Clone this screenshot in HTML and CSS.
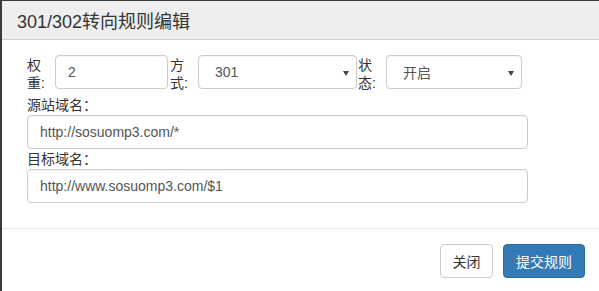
FILE: index.html
```html
<!DOCTYPE html>
<html lang="zh-CN">
<head>
    <meta charset="UTF-8">
    <title>301/302转向规则编辑</title>
    <link rel="stylesheet" href="styles.css">
</head>
<body>
    <div class="modal">
        <div class="modal-header">
            <h4 class="modal-title">301/302转向规则编辑</h4>
        </div>
        <div class="modal-body">
            <div class="inline-row">
                <label class="short-label">权重:</label>
                <div class="field weight">2</div>
                <label class="short-label">方式:</label>
                <div class="field select method"><span>301</span></div>
                <label class="short-label">状态:</label>
                <div class="field select state"><span>开启</span></div>
            </div>
            <label class="block-label">源站域名：</label>
            <div class="field wide">http://sosuomp3.com/*</div>
            <label class="block-label">目标域名：</label>
            <div class="field wide">http://www.sosuomp3.com/$1</div>
        </div>
        <div class="modal-footer">
            <button class="btn btn-default">关闭</button>
            <button class="btn btn-primary">提交规则</button>
        </div>
    </div>
</body>
</html>
```

FILE: styles.css
```css
* {
    margin: 0;
    padding: 0;
    box-sizing: border-box;
}

body {
    font-family: 'Liberation Sans', 'Noto Sans CJK SC', sans-serif;
    font-size: 14px;
    color: #333;
    background: #3a3a3a;
    height: 291px;
    overflow: hidden;
    padding: 1px 0 0 2px;
}

.modal {
    background: #fff;
    height: 290px;
}

.modal-header {
    background: #eee;
    height: 39px;
    border-bottom: 1px solid #d0d0d0;
    padding: 0 15px;
    display: flex;
    align-items: center;
}

.modal-title {
    font-size: 18px;
    font-weight: normal;
    color: #333;
}

.modal-body {
    padding: 15px 25px 25px;
    border-bottom: 1px solid #e5e5e5;
}

.inline-row {
    display: flex;
    align-items: flex-start;
    height: 34px;
    margin-bottom: 6px;
}

.short-label {
    width: 28px;
    line-height: 18px;
    margin-top: 1px;
    padding-right: 10px;
}

.field {
    height: 34px;
    border: 1px solid #ccc;
    border-radius: 4px;
    padding: 0 12px;
    color: #555;
    display: flex;
    align-items: center;
    box-shadow: inset 0 1px 1px rgba(0, 0, 0, 0.05);
}

.weight {
    width: 113px;
    margin-right: 2px;
}

.select {
    justify-content: space-between;
    padding: 0 7px 0 16px;
}

.select::after {
    content: '';
    border-left: 3px solid transparent;
    border-right: 3px solid transparent;
    border-top: 5px solid #444;
    margin-top: 2px;
}

.method {
    width: 159px;
    margin-right: 1px;
}

.state {
    width: 136px;
}

.block-label {
    display: block;
    line-height: 20px;
}

.wide {
    width: 501px;
}

.modal-footer {
    display: flex;
    justify-content: flex-end;
    gap: 10px;
    padding: 15px 14px 0 0;
}

.btn {
    font-family: inherit;
    font-size: 14px;
    height: 34px;
    border-radius: 4px;
    padding: 0;
    border: 1px solid #ccc;
    white-space: nowrap;
    cursor: pointer;
}

.btn-default {
    background: #fff;
    color: #333;
    width: 53px;
}

.btn-primary {
    background: #337ab7;
    border-color: #2e6da4;
    color: #fff;
    width: 82px;
}
```
